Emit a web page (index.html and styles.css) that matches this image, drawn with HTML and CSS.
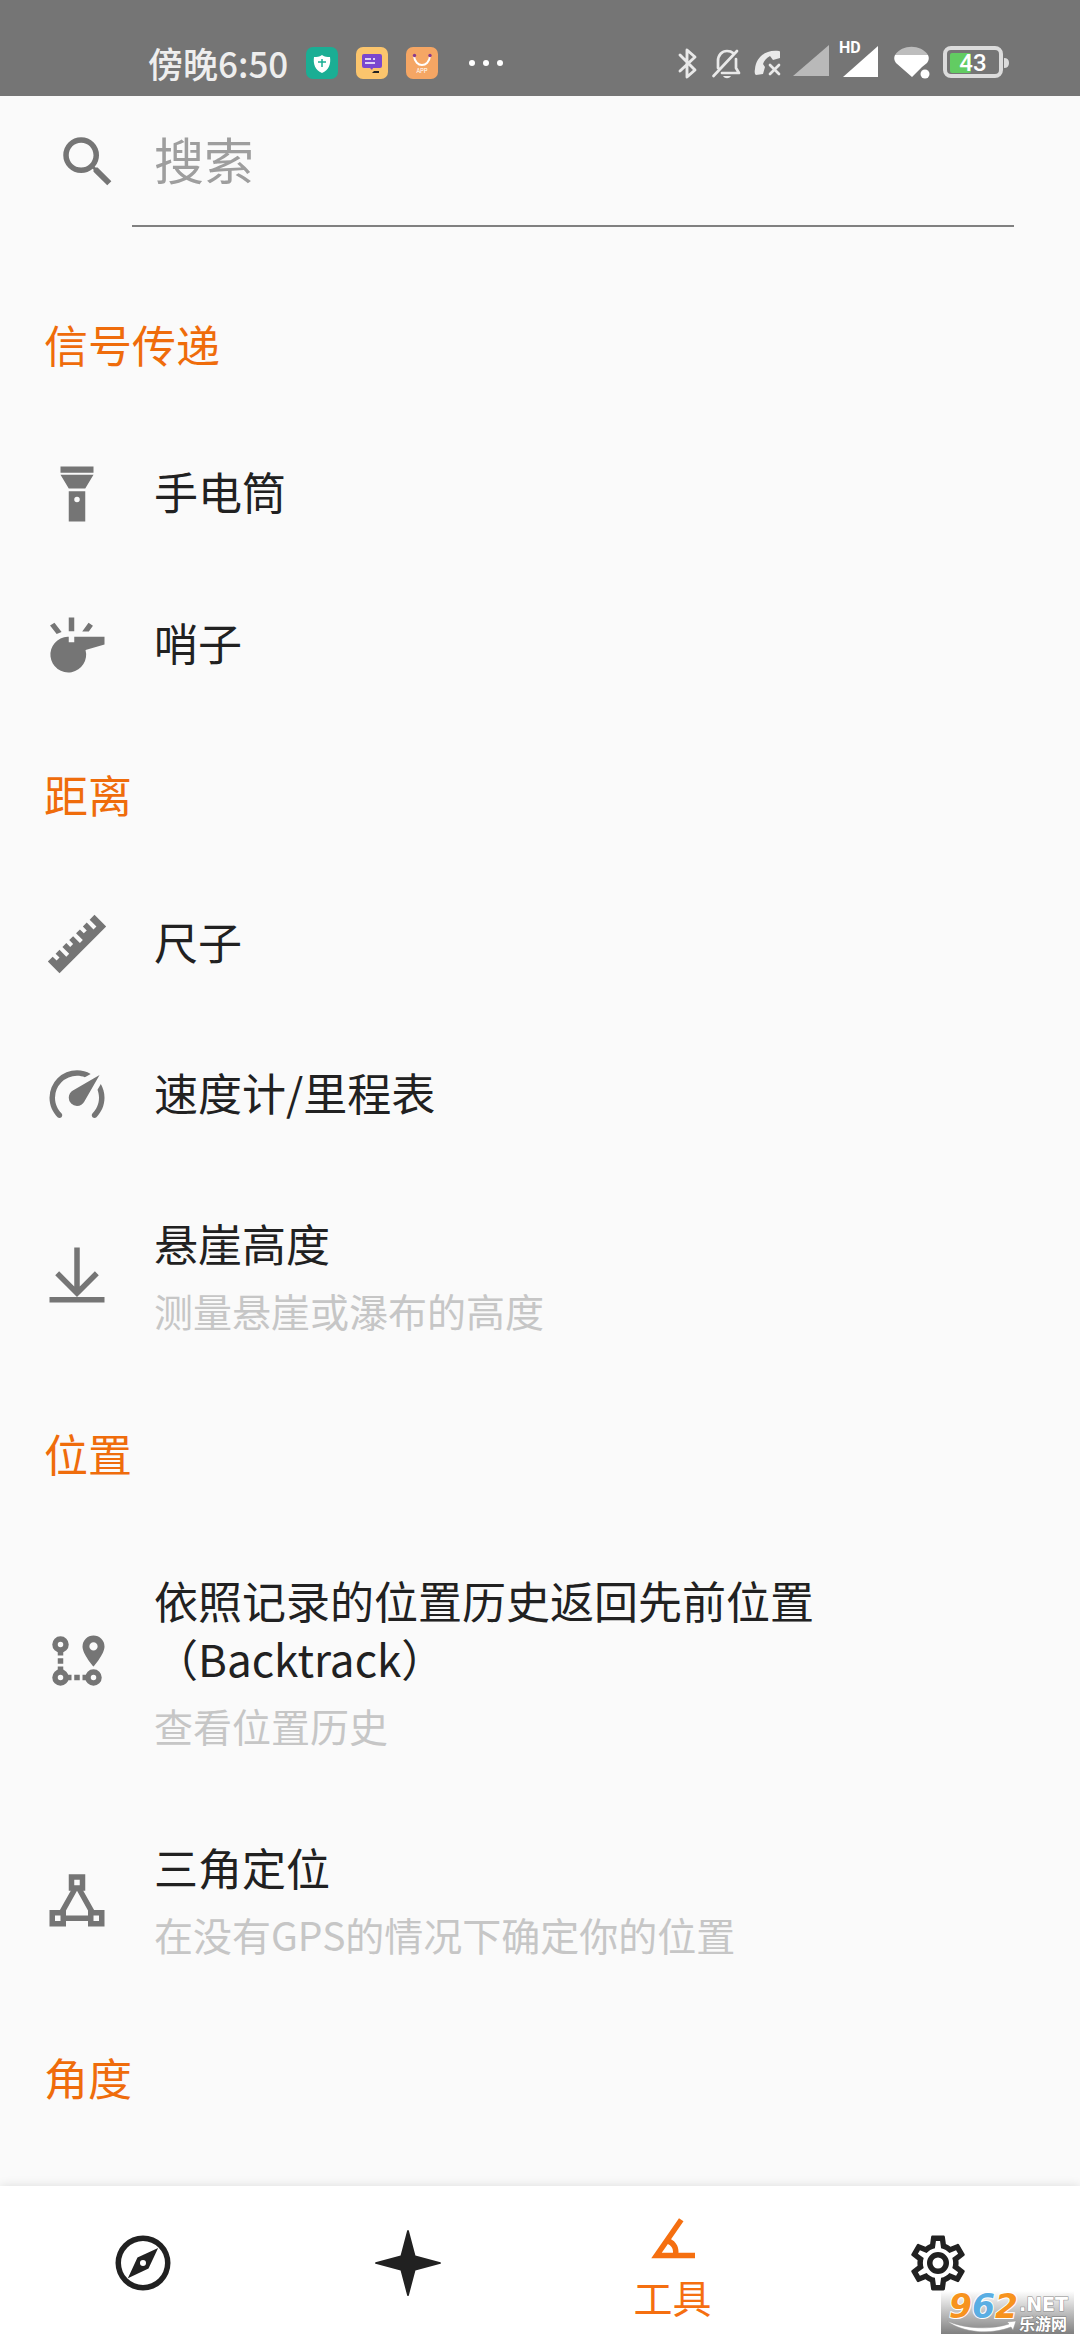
FILE: index.html
```html
<!DOCTYPE html>
<html lang="zh-CN">
<head>
  <meta charset="UTF-8">
  <meta name="viewport" content="width=device-width, initial-scale=1">
  <title>工具</title>
  <link rel="stylesheet" href="styles.css">
</head>
<body>
  <header class="status">
    <span class="time">傍晚6:50</span>
    <div class="apps">
      <svg width="32" height="32" viewBox="0 0 32 32">
        <rect width="32" height="32" rx="7" fill="#1aae94"/>
        <path d="M16 8c3 2 5 2 8 2 1 7-1 13-8 16-7-3-9-9-8-16 3 0 5 0 8-2z" fill="#fff"/>
        <path d="M16 12v8M12 15h8" stroke="#1aae94" stroke-width="1.500"/>
      </svg>
      <svg width="32" height="32" viewBox="0 0 32 32">
        <rect width="32" height="32" rx="7" fill="#fbc56d"/>
        <path d="M8 7h16q2 0 2 2v10q0 2-2 2h-7l-1 2-2-2H8q-2 0-2-2V9q0-2 2-2z" fill="#7a47cf"/>
        <path d="M9 12h6M17 12h2M9 16h10" stroke="#fff" stroke-width="1.500"/>
        <path d="M16 26l2-2h5v2z" fill="#222"/>
      </svg>
      <svg width="32" height="32" viewBox="0 0 32 32">
        <rect width="32" height="32" rx="7" fill="#f5a664"/>
        <path d="M8 9c1 12 15 12 16 0" fill="none" stroke="#fff" stroke-width="2"/>
        <circle cx="8.500" cy="8.500" r="1.700" fill="#8a3a8c"/>
        <circle cx="24" cy="8.500" r="1.700" fill="#8a3a8c"/>
        <text x="16" y="26" text-anchor="middle" class="app-text">APP</text>
      </svg>
    </div>
    <svg class="dots" width="34" height="6" viewBox="0 0 34 6" fill="#fff">
      <circle cx="3" cy="3" r="3"/><circle cx="17" cy="3" r="3"/><circle cx="31" cy="3" r="3"/>
    </svg>
    <div class="system">
      <svg width="20" height="44" viewBox="0 0 20 44" fill="none" stroke="#e9e9e9" stroke-width="2.900" stroke-linejoin="round" stroke-linecap="round">
        <path d="M2 14l15 15-8 7V9l8 7L2 30"/>
      </svg>
      <svg width="29" height="44" viewBox="0 0 29 44" fill="none" stroke="#e9e9e9" stroke-width="2.700" stroke-linejoin="round" stroke-linecap="round">
        <path d="M6 27V20c0-6 4-10 9-10 3 0 5 1 6 2M24 18v9l3 5H10M1.500 35L25 10"/>
        <path d="M11 35h8c-2 3-6 3-8 0z" fill="#e9e9e9" stroke="none"/>
      </svg>
      <svg width="24" height="44" viewBox="0 0 24 44">
        <path d="M1 34q-2-1-1-6C1 16 11 8 24 10q1 0 1 1v6l-7 2-3-4c-4 2-6 5-7 8l2 3-2 7z" fill="#e9e9e9"/>
        <path d="M15 24l9 9M24 24l-9 9" stroke="#e9e9e9" stroke-width="2.700" stroke-linecap="round"/>
      </svg>
      <svg width="87" height="44" viewBox="0 0 87 44" fill="#fff">
        <path d="M36 4v31H0z" fill="#b9b9b9"/>
        <path d="M85 5v31H50z"/>
        <text x="46" y="12" class="hd">HD</text>
      </svg>
      <svg width="35" height="44" viewBox="0 0 35 44" fill="#fff">
        <path d="M1 14C8 3 27 3 34 14z" fill="#bdbdbd"/>
        <path d="M1 14h33q2 4-1 8l-5 4-10 10L2 22q-3-4-1-8z"/>
        <circle cx="31" cy="33" r="4.500"/>
      </svg>
      <svg width="66" height="44" viewBox="0 0 66 44">
        <rect x="2" y="7" width="56" height="28" rx="6" fill="none" stroke="#dcdcdc" stroke-width="4"/>
        <rect x="7" y="12" width="21" height="20" rx="2" fill="#62cc62"/>
        <path d="M61 17q5 0 5 5t-5 5z" fill="#dcdcdc"/>
        <text x="30" y="30" text-anchor="middle" class="battery-text">43</text>
      </svg>
    </div>
  </header>

  <main>
    <form class="search">
      <label for="search">
        <svg class="icon" viewBox="0 0 24 24"><title>搜索</title><path d="M15.500 14h-.79l-.28-.27A6.471 6.471 0 0 0 16 9.500 6.500 6.500 0 1 0 9.500 16c1.610 0 3.090-.59 4.230-1.570l.27.28v.79l5 4.990L20.490 19l-4.990-5zm-6 0C7.010 14 5 11.990 5 9.500S7.010 5 9.500 5 14 7.010 14 9.500 11.990 14 9.500 14z"/></svg>
      </label>
      <input type="text" id="search" placeholder="搜索">
    </form>

    <section>
      <h2>信号传递</h2>
      <a href="#" class="row">
        <svg class="icon" viewBox="0 0 24 24"><path fill-rule="evenodd" d="M6 2h12v2.300H6zM6 5h12l-3 5H9zM9 11h6v11H9zM12 13a1 1 0 1 0 0 2 1 1 0 0 0 0-2z"/></svg>
        <span class="body"><span class="name">手电筒</span></span>
      </a>
      <a href="#" class="row">
        <svg class="icon" viewBox="0 0 24 24"><path d="M9 2h2v5H9zM2.200 4.900l1.600-1L6.400 7.300l-1.800.7zM16.200 3.900l1.600 1.100-1.500 2.100h-2.400zM9 9v2h2V9h11v2.800l-6.900 2A6.500 6.500 0 1 1 8.600 9z"/></svg>
        <span class="body"><span class="name">哨子</span></span>
      </a>
    </section>

    <section>
      <h2>距离</h2>
      <a href="#" class="row">
        <svg class="icon" viewBox="0 0 24 24"><path d="M1.390 18.360l1.770-1.760L4.580 18l1.060-1.050-1.420-1.410 1.420-1.420 2.470 2.480 1.060-1.060-2.470-2.480 1.410-1.410 1.420 1.410L10.590 12l-1.420-1.410 1.420-1.420 2.470 2.480 1.060-1.060-2.470-2.480 1.410-1.410 1.410 1.410 1.070-1.060-1.420-1.410 1.420-1.420L18 6.700l1.070-1.060-2.470-2.480 1.760-1.770 4.250 4.250L5.640 22.610z"/></svg>
        <span class="body"><span class="name">尺子</span></span>
      </a>
      <a href="#" class="row">
        <svg class="icon" viewBox="0 0 24 24"><path d="M12,16A3,3 0 0,1 9,13C9,11.880 9.610,10.900 10.500,10.390L20.210,4.770L14.680,14.350C14.180,15.330 13.170,16 12,16M12,3C13.810,3 15.500,3.500 16.970,4.320L14.870,5.530C14,5.190 13,5 12,5A8,8 0 0,0 4,13C4,15.210 4.890,17.210 6.340,18.650H6.350C6.740,19.040 6.740,19.670 6.350,20.060C5.960,20.450 5.320,20.450 4.930,20.070C3.120,18.260 2,15.760 2,13A10,10 0 0,1 12,3M22,13C22,15.760 20.880,18.260 19.070,20.070C18.680,20.450 18.050,20.450 17.660,20.060C17.270,19.670 17.270,19.040 17.660,18.650C19.110,17.200 20,15.210 20,13C20,12 19.810,11 19.460,10.100L20.670,8C21.500,9.500 22,11.180 22,13Z"/></svg>
        <span class="body"><span class="name">速度计/里程表</span></span>
      </a>
      <a href="#" class="row">
        <svg class="icon" viewBox="0 0 24 24"><path d="M19.920 12.080L12 20l-7.920-7.920 1.420-1.410 5.500 5.500V2h2v14.170l5.500-5.510zM2 20h20v2H2z"/></svg>
        <span class="body">
          <span class="name">悬崖高度</span>
          <span class="desc">测量悬崖或瀑布的高度</span>
        </span>
      </a>
    </section>

    <section>
      <h2>位置</h2>
      <a href="#" class="row">
        <svg class="icon" viewBox="0 0 24 24">
          <g fill="none" stroke="currentColor" stroke-width="2">
            <circle cx="6" cy="6" r="2"/><circle cx="6" cy="18" r="2"/><circle cx="18" cy="18" r="2"/>
            <path d="M6 8.500V10M6 11v2M6 14v1.500M8.500 18H10M11 18h2M14 18h1.500"/>
          </g>
          <path fill-rule="evenodd" d="M18 2.700a4 4 0 0 0-4 4c0 2.800 4 7.300 4 7.300s4-4.500 4-7.300a4 4 0 0 0-4-4zm0 2.500a1.500 1.500 0 1 1 0 3 1.500 1.500 0 0 1 0-3z"/>
        </svg>
        <span class="body">
          <span class="name">依照记录的位置历史返回先前位置<br>（Backtrack）</span>
          <span class="desc">查看位置历史</span>
        </span>
      </a>
      <a href="#" class="row">
        <svg class="icon" viewBox="0 0 24 24"><path fill-rule="evenodd" d="M9 3v6h.73l-3.940 7H2v6h6v-2h8v2h6v-6h-3.790l-3.940-7H15V3zm2 2h2v2h-2zm1 4.040l4 7.110V18H8v-1.850zM4 18h2v2H4zm14 0h2v2h-2z"/></svg>
        <span class="body">
          <span class="name">三角定位</span>
          <span class="desc">在没有GPS的情况下确定你的位置</span>
        </span>
      </a>
    </section>

    <section>
      <h2>角度</h2>
    </section>
  </main>

  <nav>
    <a href="#" aria-label="导航">
      <svg class="icon" viewBox="0 0 24 24"><path fill-rule="evenodd" d="M12 2a10 10 0 1 0 0 20 10 10 0 0 0 0-20zm0 2a8 8 0 1 1 0 16 8 8 0 0 1 0-16zM6.500 17.500l7.510-3.490L17.500 6.500 9.990 9.990zM12 10.900a1.100 1.100 0 1 1 0 2.200 1.100 1.100 0 0 1 0-2.200z"/></svg>
    </a>
    <a href="#" aria-label="天文">
      <svg class="icon" viewBox="0 0 24 24"><path d="M11.700.2q.3-.4.600 0l2.400 9.100 9.100 2.400q.4.300 0 .6l-9.100 2.400-2.400 9.100q-.3.400-.6 0l-2.400-9.100-9.100-2.400q-.4-.3 0-.6l9.100-2.400z"/></svg>
    </a>
    <a href="#" class="active">
      <svg class="icon" viewBox="0 0 24 24"><path d="M20,19H4.090L14.180,4.430L15.820,5.570L11.280,12.130C12.890,12.960 14,14.620 14,16.540C14,16.700 14,16.850 13.970,17H20V19M7.910,17H11.960C12,16.850 12,16.700 12,16.540C12,15.280 11.240,14.220 10.140,13.780L7.910,17Z"/></svg>
      工具
    </a>
    <a href="#" aria-label="设置">
      <svg class="icon" viewBox="0 0 24 24"><path d="M12,8A4,4 0 0,1 16,12A4,4 0 0,1 12,16A4,4 0 0,1 8,12A4,4 0 0,1 12,8M12,10A2,2 0 0,0 10,12A2,2 0 0,0 12,14A2,2 0 0,0 14,12A2,2 0 0,0 12,10M10,22C9.750,22 9.540,21.820 9.500,21.580L9.130,18.930C8.500,18.680 7.960,18.340 7.440,17.940L4.950,18.950C4.730,19.030 4.460,18.950 4.340,18.730L2.340,15.270C2.210,15.050 2.270,14.780 2.460,14.630L4.570,12.970L4.500,12L4.570,11L2.460,9.370C2.270,9.220 2.210,8.950 2.340,8.730L4.340,5.270C4.460,5.050 4.730,4.960 4.950,5.050L7.440,6.050C7.960,5.660 8.500,5.320 9.130,5.070L9.500,2.420C9.540,2.180 9.750,2 10,2H14C14.250,2 14.460,2.180 14.500,2.420L14.870,5.070C15.500,5.320 16.040,5.660 16.560,6.050L19.050,5.050C19.270,4.960 19.540,5.050 19.660,5.270L21.660,8.730C21.790,8.950 21.730,9.220 21.540,9.370L19.430,11L19.500,12L19.430,13L21.540,14.630C21.730,14.780 21.790,15.050 21.660,15.270L19.660,18.730C19.540,18.950 19.270,19.040 19.050,18.950L16.560,17.950C16.040,18.340 15.500,18.680 14.870,18.930L14.500,21.580C14.460,21.820 14.250,22 14,22H10M11.250,4L10.880,6.610C9.680,6.860 8.620,7.500 7.850,8.390L5.440,7.350L4.690,8.650L6.800,10.200C6.400,11.370 6.400,12.640 6.800,13.800L4.680,15.360L5.430,16.660L7.860,15.620C8.630,16.500 9.680,17.140 10.870,17.380L11.240,20H12.760L13.130,17.390C14.320,17.140 15.370,16.500 16.140,15.620L18.570,16.660L19.320,15.360L17.200,13.810C17.600,12.640 17.600,11.370 17.200,10.200L19.310,8.650L18.560,7.350L16.150,8.390C15.380,7.500 14.320,6.860 13.120,6.620L12.750,4H11.250Z"/></svg>
    </a>
  </nav>

  <svg class="watermark" width="133" height="43" viewBox="0 0 133 43">
    <defs>
      <linearGradient id="shade" x1="0" y1="0" x2="0" y2="1">
        <stop offset="0" stop-color="#fff"/>
        <stop offset="1" stop-color="#808080"/>
      </linearGradient>
    </defs>
    <rect width="133" height="43" fill="url(#shade)"/>
    <text x="8" y="27" class="digits"><tspan fill="#f7931e">9</tspan><tspan fill="#5aaee3">6</tspan><tspan fill="#f7931e">2</tspan></text>
    <path d="M6 30c18 8 44 9 62 3l-2-2 9-1-3 9-2-3C50 44 22 42 6 30z" fill="#fff" stroke="#999" stroke-width=".5"/>
    <text x="78" y="20" class="net">.NET</text>
    <text x="78" y="39" class="site">乐游网</text>
  </svg>
</body>
</html>
```

FILE: styles.css
```css
* {
  box-sizing: border-box;
}
body {
  margin: 0;
  min-height: 100vh;
  display: flex;
  flex-direction: column;
  background-color: #fafafa;
  color: #212121;
  font-family: "Noto Sans CJK SC", sans-serif;
  font-size: 44px;
  line-height: 58px;
}
a {
  color: inherit;
  text-decoration: none;
}
svg {
  display: block;
  flex-shrink: 0;
  overflow: visible;
}
.icon {
  width: 66px;
  height: 66px;
  fill: currentColor;
}

/* status bar */
.status {
  display: flex;
  align-items: center;
  height: 96px;
  padding: 30px 71px 0 148px;
  background-color: #757575;
}
.time {
  width: 158px;
  color: #eee;
  font-size: 35px;
  font-weight: 500;
  line-height: 44px;
  white-space: nowrap;
}
.apps {
  display: flex;
  gap: 18px;
}
.dots {
  margin-left: 31px;
}
.system {
  display: flex;
  gap: 14px;
  margin-left: auto;
}
.app-text {
  fill: #fff;
  font-size: 6px;
}
.hd {
  font-family: Roboto, sans-serif;
  font-size: 16px;
  font-weight: 700;
}
.battery-text {
  fill: #fff;
  font-family: Roboto, sans-serif;
  font-size: 24px;
  font-weight: 500;
}

/* search */
.search {
  display: flex;
  align-items: center;
  gap: 11px;
  margin: 0 66px 43px 55px;
  color: #757575;
}
.search input {
  flex: 1;
  min-width: 0;
  height: 131px;
  padding: 0 22px 5px;
  border: none;
  border-bottom: 2px solid #808080;
  background: none;
  font-family: inherit;
  font-size: 50px;
  outline: none;
}
.search input::placeholder {
  color: #9e9e9e;
}

/* tool list */
h2 {
  margin: 0;
  padding: 45px 44px;
  color: #ef6c0b;
  font-size: 44px;
  font-weight: 400;
}
.row {
  display: flex;
  align-items: center;
  gap: 44px;
  padding: 0 44px;
}
.row .icon {
  color: #757575;
}
.body {
  padding: 44px 0 49px;
}
.name,
.desc {
  display: block;
}
.desc {
  margin-top: 18px;
  color: #c6c6c6;
  font-size: 39px;
  line-height: 40px;
}

/* bottom bar */
nav {
  display: flex;
  height: 154px;
  margin-top: auto;
  padding: 0 10px;
  background-color: #fff;
  box-shadow: 0 0 10px rgba(0, 0, 0, 0.12);
}
nav a {
  flex: 1;
  display: flex;
  flex-direction: column;
  align-items: center;
  justify-content: center;
  font-size: 39px;
  line-height: 48px;
}
nav .active {
  color: #f56f10;
}

.watermark {
  position: absolute;
  right: 6px;
  bottom: 6px;
}
.digits {
  font-family: "DejaVu Sans", sans-serif;
  font-size: 33px;
  font-style: italic;
  font-weight: 700;
  stroke: #fff;
  stroke-width: 2px;
  paint-order: stroke;
}
.net {
  fill: #fff;
  stroke: #888;
  stroke-width: 1px;
  paint-order: stroke;
  font-family: "DejaVu Sans", sans-serif;
  font-size: 19px;
  font-weight: 700;
}
.site {
  fill: #fff;
  stroke: #777;
  stroke-width: 1px;
  paint-order: stroke;
  font-size: 16px;
  font-weight: 700;
}
```
